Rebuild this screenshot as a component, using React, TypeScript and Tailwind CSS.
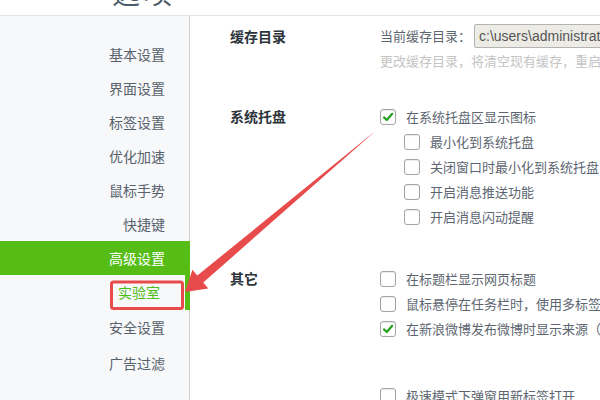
import React from "react";

const FONT = { fontFamily: '"Noto Sans CJK SC", "Noto Sans", sans-serif' };

const menu = [
    { label: "基本设置" },
    { label: "界面设置" },
    { label: "标签设置" },
    { label: "优化加速" },
    { label: "鼠标手势" },
    { label: "快捷键" },
    { label: "高级设置", active: true },
    { label: "实验室", lab: true },
    { label: "安全设置" },
    { label: "广告过滤" },
];

function Checkbox({ checked }: { checked?: boolean }) {
    return (
        <span className="flex items-center justify-center w-[16px] h-[16px] shrink-0 rounded-[3px] border border-[#a5a5a5] bg-white shadow-[inset_0_1px_1px_rgba(0,0,0,0.08)]">
            {checked && (
                <svg width="12" height="12" viewBox="0 0 12 12" fill="none">
                    <path
                        d="M2 6.4 L4.8 9 L10.2 2.8"
                        stroke="#22a01a"
                        strokeWidth="2.2"
                        strokeLinecap="round"
                        strokeLinejoin="round"
                    />
                </svg>
            )}
        </span>
    );
}

function Option({
    text,
    checked,
    sub,
}: {
    text: string;
    checked?: boolean;
    sub?: boolean;
}) {
    return (
        <div
            className={`flex items-center h-[25px] gap-[10px] whitespace-nowrap ${sub ? "pl-[24px]" : ""}`}
        >
            <Checkbox checked={checked} />
            <span className="text-[13px] text-[#5d6670]">{text}</span>
        </div>
    );
}

function Label({ children }: { children: React.ReactNode }) {
    return (
        <div className="w-[150px] shrink-0 h-[25px] flex items-center text-[14px] font-bold text-[#2c333b]">
            {children}
        </div>
    );
}

export default function App() {
    return (
        <div
            className="relative w-[600px] h-[400px] overflow-hidden bg-white flex flex-col"
            style={FONT}
        >
            {/* Title bar, mostly scrolled out */}
            <div className="h-[16px] shrink-0 overflow-hidden border-b border-[#e4e4e4] pl-[112px]">
                <div className="mt-[-22px] text-[28px] leading-[28px] tracking-[4px] text-[#4d5b69] whitespace-nowrap">
                    选项
                </div>
            </div>

            <div className="flex flex-1 min-h-0">
                {/* Sidebar */}
                <div className="w-[190px] shrink-0 bg-[#f7f8fa] border-r border-[#cfcfcf] pt-[21px]">
                    {menu.map((m) => (
                        <div
                            key={m.label}
                            className={`flex items-center justify-end pr-[25px] text-[14px] -mr-px ${
                                m.active
                                    ? "h-[34px] bg-[#55bd15] text-white"
                                    : m.lab
                                      ? "h-[35px] border-r-[5px] border-[#55bd15] pr-[19px] text-[#4cbd16]"
                                      : m.label === "广告过滤"
                                        ? "h-[38px] text-[#58626d]"
                                        : "h-[34px] text-[#58626d]"
                            }`}
                        >
                            {m.label}
                        </div>
                    ))}
                </div>

                {/* Content */}
                <div className="flex-1 min-w-0 pl-[40px] pt-[8px] flex flex-col">
                    {/* 缓存目录 */}
                    <div className="flex items-center h-[24px]">
                        <Label>缓存目录</Label>
                        <span className="text-[13px] text-[#5d6670] whitespace-nowrap">
                            当前缓存目录：
                        </span>
                        <div className="ml-[3px] h-[24px] w-[200px] shrink-0 flex items-center pl-[4px] rounded-[2px] border border-[#b3b3b3] bg-[#ecebe5] text-[14px] text-[#555] whitespace-nowrap overflow-hidden" style={{ fontFamily: '"Liberation Sans", Arial, sans-serif' }}>
                            c:\users\administrator\appdata
                        </div>
                    </div>
                    <div className="pl-[150px] mt-[4px] leading-[18px] text-[13px] text-[#c4c4c4] whitespace-nowrap">
                        更改缓存目录，将清空现有缓存，重启浏览器后生效
                    </div>

                    {/* 系统托盘 */}
                    <div className="flex mt-[34px]">
                        <Label>系统托盘</Label>
                        <div className="flex flex-col">
                            <Option text="在系统托盘区显示图标" checked />
                            <Option text="最小化到系统托盘" sub />
                            <Option text="关闭窗口时最小化到系统托盘" sub />
                            <Option text="开启消息推送功能" sub />
                            <Option text="开启消息闪动提醒" sub />
                        </div>
                    </div>

                    {/* 其它 */}
                    <div className="flex mt-[37px]">
                        <Label>其它</Label>
                        <div className="flex flex-col">
                            <Option text="在标题栏显示网页标题" />
                            <Option text="鼠标悬停在任务栏时，使用多标签预览" />
                            <Option text="在新浪微博发布微博时显示来源（）" checked />
                            <div className="mt-[42px]">
                                <Option text="极速模式下弹窗用新标签打开" />
                            </div>
                        </div>
                    </div>
                </div>
            </div>

            {/* Red annotation */}
            <svg
                className="absolute inset-0 pointer-events-none"
                width="600"
                height="400"
                viewBox="0 0 600 400"
            >
                <rect
                    x="111.5"
                    y="282"
                    width="71"
                    height="26.5"
                    rx="2"
                    fill="none"
                    stroke="#e84b4b"
                    strokeWidth="3"
                />
                <polygon
                    points="373.8,132.4 203.2,282.6 208.3,288.6 185,292 192.4,269.8 197.3,275.6 372.6,133.2"
                    fill="#e84b4b"
                />
            </svg>
        </div>
    );
}
